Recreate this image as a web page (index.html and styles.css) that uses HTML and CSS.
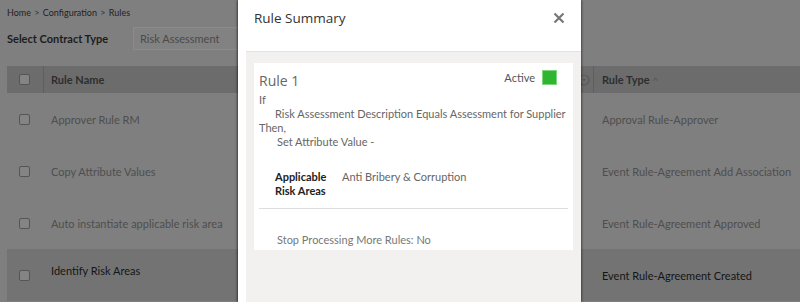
FILE: index.html
```html
<!DOCTYPE html>
<html lang="en">
<head>
    <meta charset="UTF-8">
    <title>Rules - Rule Summary</title>
    <link rel="stylesheet" href="styles.css">
</head>
<body>
    <div class="page">
        <div class="crumbs">Home <span class="sep">&gt;</span> Configuration <span class="sep">&gt;</span> Rules</div>
        <div class="filter">
            <span class="filter-label">Select Contract Type</span>
            <div class="select">Risk Assessment</div>
        </div>
        <div class="grid">
            <div class="row head">
                <div class="cell chk"><span class="box"></span></div>
                <div class="cell name">Rule Name
                    <svg class="filter-ico" width="12" height="12" viewBox="0 0 12 12"><circle cx="6" cy="6" r="5" fill="none" stroke="#5a5a5a" stroke-width="1.2"/><path d="M3.8 5 L8.2 5 L6 7.6 Z" fill="#5a5a5a"/></svg>
                </div>
                <div class="cell type">Rule Type <span class="caret">^</span></div>
            </div>
            <div class="row">
                <div class="cell chk"><span class="box"></span></div>
                <div class="cell name">Approver Rule RM</div>
                <div class="cell type">Approval Rule-Approver</div>
            </div>
            <div class="row">
                <div class="cell chk"><span class="box"></span></div>
                <div class="cell name">Copy Attribute Values</div>
                <div class="cell type">Event Rule-Agreement Add Association</div>
            </div>
            <div class="row">
                <div class="cell chk"><span class="box"></span></div>
                <div class="cell name">Auto instantiate applicable risk area</div>
                <div class="cell type">Event Rule-Agreement Approved</div>
            </div>
            <div class="row selected">
                <div class="cell chk"><span class="box"></span></div>
                <div class="cell name"><span class="lift">Identify Risk Areas</span></div>
                <div class="cell type">Event Rule-Agreement Created</div>
            </div>
        </div>
    </div>

    <div class="modal">
        <div class="modal-head">
            <span class="modal-title">Rule Summary</span>
            <svg class="close" width="12" height="12" viewBox="0 0 12 12"><path d="M1.5 1.5 L10.5 10.5 M10.5 1.5 L1.5 10.5" stroke="#777" stroke-width="2.2"/></svg>
        </div>
        <div class="modal-body">
            <div class="card">
                <div class="card-top">
                    <span class="rule-title">Rule 1</span>
                    <span class="status">Active <span class="dot"></span></span>
                </div>
                <div class="logic">
                    <div>If</div>
                    <div class="ind">Risk Assessment Description Equals Assessment for Supplier</div>
                    <div>Then,</div>
                    <div class="ind2">Set Attribute Value -</div>
                </div>
                <div class="areas">
                    <div class="areas-label">Applicable<br>Risk Areas</div>
                    <div class="areas-value">Anti Bribery &amp; Corruption</div>
                </div>
                <div class="divider"></div>
                <div class="stop">Stop Processing More Rules: No</div>
            </div>
        </div>
    </div>
</body>
</html>
```

FILE: styles.css
```css
body {
    margin: 0;
    padding: 0;
    width: 800px;
    height: 302px;
    overflow: hidden;
    background-color: #7f7f7f;
    font-family: Lato, "Open Sans", sans-serif;
    position: relative;
}
.page {
    padding-left: 7px;
}
.crumbs {
    font-size: 9px;
    color: #1f1f1f;
    padding-top: 7px;
    line-height: 12px;
}
.crumbs .sep {
    color: #333;
    margin: 0 1px;
}
.filter {
    display: flex;
    align-items: center;
    margin-top: 8px;
    height: 23px;
}
.filter-label {
    font-size: 11px;
    font-weight: bold;
    color: #1c1c1c;
    width: 126px;
}
.select {
    width: 200px;
    height: 21px;
    border: 1px solid #8b8b8b;
    background-color: #828282;
    font-size: 11px;
    color: #4a4a4a;
    line-height: 21px;
    padding-left: 6px;
}
.grid {
    margin-top: 16px;
}
.row {
    display: grid;
    grid-template-columns: 37px 1fr 206px;
    height: 52px;
    align-items: center;
    font-size: 11px;
    color: #4e4e4e;
}
.row.head {
    height: 27px;
    background-color: #6c6c6c;
    color: #2e2e2e;
    font-weight: bold;
    font-size: 11px;
}
.row.selected {
    background-color: #737373;
    color: #151515;
}
.row.selected .lift {
    position: relative;
    top: -5px;
}
.cell {
    height: 100%;
    display: flex;
    align-items: center;
}
.cell.chk {
    justify-content: center;
    padding-right: 2px;
}
.cell.name {
    padding-left: 7px;
    position: relative;
}
.cell.type {
    padding-left: 8px;
}
.head .cell.chk, .head .cell.name {
    border-right: 1px solid #5f5f5f;
}
.box {
    width: 9px;
    height: 9px;
    border: 1px solid #555;
    border-radius: 2px;
    background-color: #848484;
}
.filter-ico {
    position: absolute;
    right: 3px;
    top: 8px;
}
.caret {
    font-weight: normal;
    color: #555;
    font-size: 10px;
    margin-left: 3px;
}

/* modal */
.modal {
    position: absolute;
    left: 238px;
    top: 0;
    width: 343px;
    height: 302px;
    background-color: #fff;
    box-shadow: -1px 0 2px rgba(0, 0, 0, 0.5), 1px 0 2px rgba(0, 0, 0, 0.4);
    display: flex;
    flex-direction: column;
}
.modal-head {
    height: 51px;
    display: flex;
    justify-content: space-between;
    align-items: flex-start;
    padding: 8px 16px 0 16px;
    box-sizing: border-box;
}
.modal-title {
    font-family: "Open Sans", sans-serif;
    font-size: 13.5px;
    color: #333;
    line-height: 20px;
}
.close {
    margin-top: 4px;
}
.modal-body {
    flex: 1;
    margin-left: 8px;
    background-color: #f2f1f0;
    border-top: 1px solid #e2e2e2;
    padding: 11px 8px 0 8px;
}
.card {
    background-color: #fff;
    height: 187px;
    box-sizing: border-box;
    padding: 7px 4px 0 5px;
    font-size: 11px;
    color: #666;
}
.card-top {
    display: flex;
    justify-content: space-between;
    align-items: flex-start;
}
.rule-title {
    font-family: "Open Sans", sans-serif;
    font-size: 14px;
    color: #666;
    margin-top: 1px;
}
.status {
    display: flex;
    align-items: center;
    font-size: 11px;
    color: #555;
    gap: 7px;
    margin-right: 12px;
}
.dot {
    width: 13px;
    height: 13px;
    background-color: #2fb52f;
    border: 1px solid #7fd67f;
}
.logic {
    line-height: 14px;
    margin-top: 3px;
}
.logic .ind {
    padding-left: 16px;
    white-space: nowrap;
}
.logic .ind2 {
    padding-left: 18px;
}
.areas {
    display: flex;
    margin-top: 21px;
    padding-left: 16px;
    line-height: 14px;
}
.areas-label {
    color: #222;
    font-weight: bold;
    width: 67px;
}
.areas-value {
    color: #666;
}
.divider {
    height: 1px;
    background-color: #ddd;
    margin: 10px 1px 0 0;
}
.stop {
    padding-left: 18px;
    margin-top: 24px;
    color: #777;
}
```
